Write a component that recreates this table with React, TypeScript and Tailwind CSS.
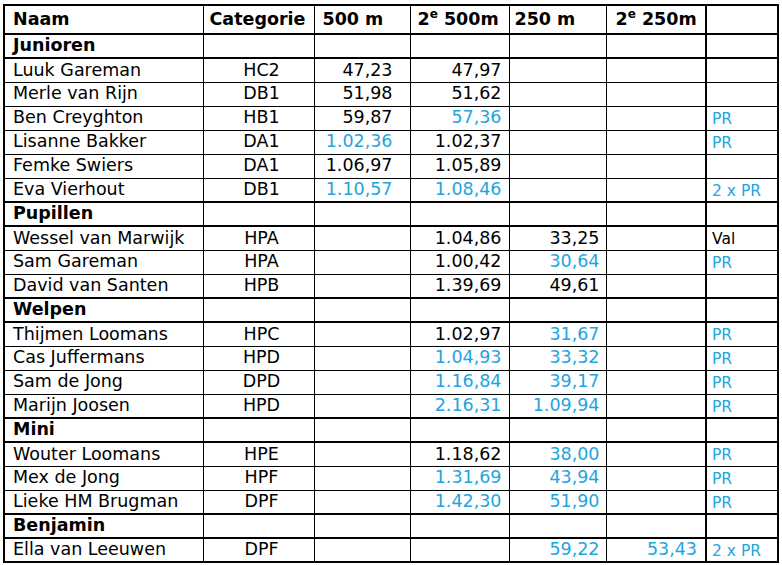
import React from "react";

type Cell = { v: string; b?: boolean };
type Row =
  | { kind: "section"; name: string }
  | { kind: "data"; name: string; cat: string; c: (Cell | null)[]; note?: Cell };

const B = (v: string): Cell => ({ v, b: true });
const K = (v: string): Cell => ({ v });

const rows: Row[] = [
  { kind: "section", name: "Junioren" },
  { kind: "data", name: "Luuk Gareman", cat: "HC2", c: [K("47,23"), K("47,97"), null, null] },
  { kind: "data", name: "Merle van Rijn", cat: "DB1", c: [K("51,98"), K("51,62"), null, null] },
  { kind: "data", name: "Ben Creyghton", cat: "HB1", c: [K("59,87"), B("57,36"), null, null], note: B("PR") },
  { kind: "data", name: "Lisanne Bakker", cat: "DA1", c: [B("1.02,36"), K("1.02,37"), null, null], note: B("PR") },
  { kind: "data", name: "Femke Swiers", cat: "DA1", c: [K("1.06,97"), K("1.05,89"), null, null] },
  { kind: "data", name: "Eva Vierhout", cat: "DB1", c: [B("1.10,57"), B("1.08,46"), null, null], note: B("2 x PR") },
  { kind: "section", name: "Pupillen" },
  { kind: "data", name: "Wessel van Marwijk", cat: "HPA", c: [null, K("1.04,86"), K("33,25"), null], note: K("Val") },
  { kind: "data", name: "Sam Gareman", cat: "HPA", c: [null, K("1.00,42"), B("30,64"), null], note: B("PR") },
  { kind: "data", name: "David van Santen", cat: "HPB", c: [null, K("1.39,69"), K("49,61"), null] },
  { kind: "section", name: "Welpen" },
  { kind: "data", name: "Thijmen Loomans", cat: "HPC", c: [null, K("1.02,97"), B("31,67"), null], note: B("PR") },
  { kind: "data", name: "Cas Juffermans", cat: "HPD", c: [null, B("1.04,93"), B("33,32"), null], note: B("PR") },
  { kind: "data", name: "Sam de Jong", cat: "DPD", c: [null, B("1.16,84"), B("39,17"), null], note: B("PR") },
  { kind: "data", name: "Marijn Joosen", cat: "HPD", c: [null, B("2.16,31"), B("1.09,94"), null], note: B("PR") },
  { kind: "section", name: "Mini" },
  { kind: "data", name: "Wouter Loomans", cat: "HPE", c: [null, K("1.18,62"), B("38,00"), null], note: B("PR") },
  { kind: "data", name: "Mex de Jong", cat: "HPF", c: [null, B("1.31,69"), B("43,94"), null], note: B("PR") },
  { kind: "data", name: "Lieke HM Brugman", cat: "DPF", c: [null, B("1.42,30"), B("51,90"), null], note: B("PR") },
  { kind: "section", name: "Benjamin" },
  { kind: "data", name: "Ella van Leeuwen", cat: "DPF", c: [null, null, B("59,22"), B("53,43")], note: B("2 x PR") },
];

const numPad = ["pr-[17px]", "pr-[7px]", "pr-[6px]", "pr-[8px]"];

export default function App() {
  return (
    <div className="w-[782px] h-[565px] bg-white pt-[4px] pl-[3px]" style={{ fontFamily: '"DejaVu Sans", Verdana, sans-serif' }}>
      <table className="border-collapse border-2 border-black text-[17.5px] leading-none text-black">
        <colgroup>
          <col className="w-[199px]" />
          <col className="w-[111px]" />
          <col className="w-[96px]" />
          <col className="w-[99px]" />
          <col className="w-[97px]" />
          <col className="w-[100px]" />
          <col className="w-[72px]" />
        </colgroup>
        <thead>
          <tr className="h-[29px] border-b-2 border-black font-bold">
            <td className="border border-black pl-[8px]">Naam</td>
            <td className="border border-black pl-[6px]">Categorie</td>
            <td className="border border-black pl-[8px]">500 m</td>
            <td className="border border-black pl-[7px]">2<sup className="text-[12px] relative -top-[7px]">e</sup> 500m</td>
            <td className="border border-black pl-[5px]">250 m</td>
            <td className="border border-black pl-[9px]">2<sup className="text-[12px] relative -top-[7px]">e</sup> 250m</td>
            <td className="border border-black border-l-2"></td>
          </tr>
        </thead>
        <tbody>
          {rows.map((r, i) =>
            r.kind === "section" ? (
              <tr key={i} className="h-[24px] border-y-2 border-black">
                <td className="border-x border-black pl-[8px] font-bold">{r.name}</td>
                <td className="border-x border-black"></td>
                <td className="border-x border-black"></td>
                <td className="border-x border-black"></td>
                <td className="border-x border-black"></td>
                <td className="border-x border-black"></td>
                <td className="border-l-2 border-black"></td>
              </tr>
            ) : (
              <tr key={i} className="h-[24px]">
                <td className="border border-black pl-[8px]">{r.name}</td>
                <td className="border border-black text-center pl-[6px]">{r.cat}</td>
                {r.c.map((c, j) => (
                  <td key={j} className={`border border-black text-right ${numPad[j]} ${c && c.b ? "text-[#1ea5de]" : ""}`}>
                    {c ? c.v : ""}
                  </td>
                ))}
                <td className={`border border-black border-l-2 pl-[5px] pt-[3px] text-[15.5px] ${r.note && r.note.b ? "text-[#1ea5de]" : ""}`}>
                  {r.note ? r.note.v : ""}
                </td>
              </tr>
            )
          )}
        </tbody>
      </table>
    </div>
  );
}
